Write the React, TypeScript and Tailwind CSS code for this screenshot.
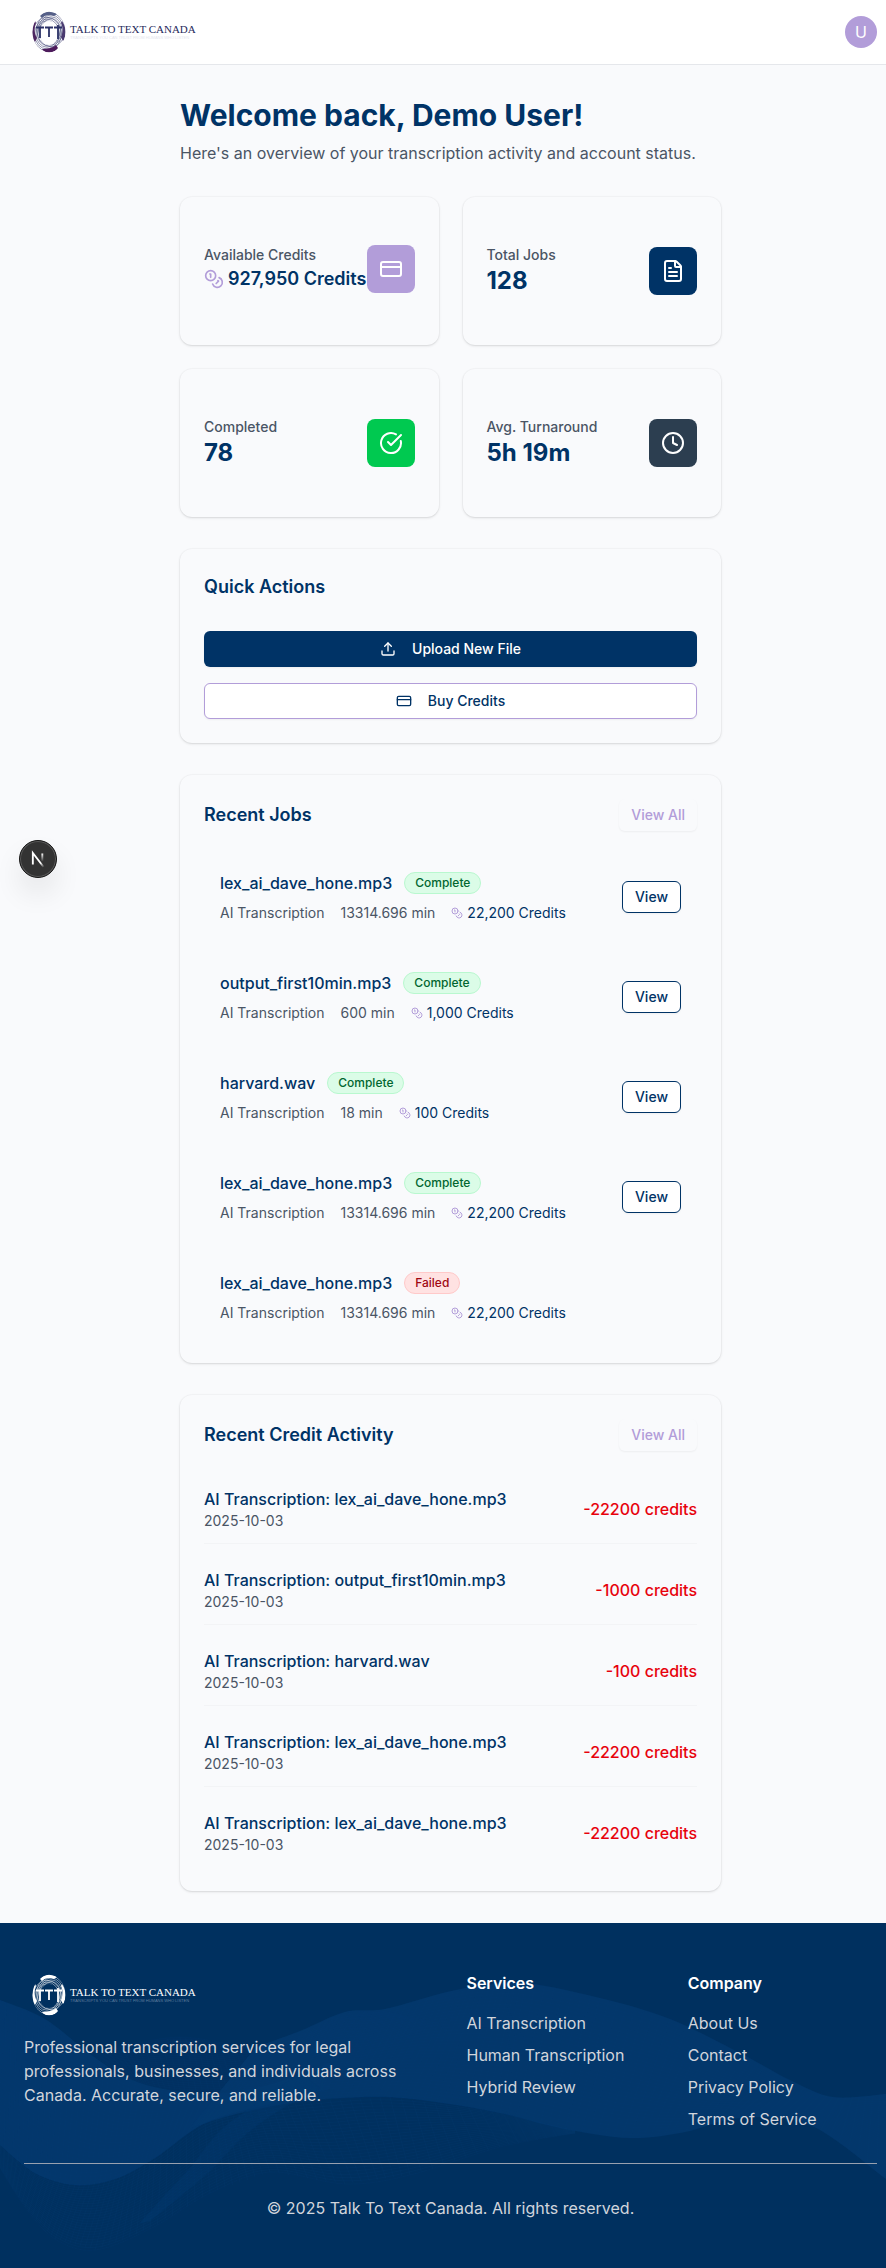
import React from "react";
import { CircleCheckBig, Clock, Coins, CreditCard, FileText, Upload } from "lucide-react";

type Point = [number, number];

const RINGS = [9.5, 11, 12.5, 14];

function LogoMark({ light }: { light: boolean }) {
  const id = light ? "mark-light" : "mark-dark";
  const ink = light ? "#ffffff" : "#2b3166";
  const paper = light ? "#00305f" : "#ffffff";
  return (
    <svg width="34" height="42" viewBox="0 0 34 42" fill="none" className="shrink-0" aria-hidden="true">
      <defs>
        <clipPath id={id}>
          <ellipse cx="17" cy="21" rx="16.5" ry="20.3" />
        </clipPath>
      </defs>
      <g clipPath={`url(#${id})`}>
        <ellipse cx="17" cy="21" rx="16" ry="20" fill={paper} />
        {RINGS.map((r) => (
          <g key={r} stroke={ink} strokeWidth="0.7" opacity="0.7">
            <ellipse cx="19" cy="19" rx={r} ry={r * 1.2} />
            <ellipse cx="15" cy="23" rx={r} ry={r * 1.2} />
          </g>
        ))}
        <ellipse cx="17" cy="22" rx="9.5" ry="12" fill={paper} />
        <path d="M8 5C13-1 22-1 25 3L22 5C18 3 13 4 10 7Z" fill={light ? "#fff" : "#566088"} />
        <path d="M10 38C14 38 21 37 24 34L26 37C22 43 13 43 10 38Z" fill={light ? "#fff" : "#4d1b5c"} />
        <path d="M3 10C-1 17-1 26 3 31L5 27C2 22 2 17 4 12Z" fill={light ? "#fff" : "#4d2560"} />
        <path d="M30 10C35 17 34 26 31 30L29 26C31 21 31 16 29 12Z" fill={light ? "#fff" : "#4a3a70"} />
      </g>
      <path
        d="M4 16.5H12M13 16.5H21M22 16.5H30M8 16.5V27M17 16.5V26M26 14V28"
        stroke={ink}
        strokeWidth="1.8"
      />
    </svg>
  );
}

function Logo({ light = false }: { light?: boolean }) {
  return (
    <a href="#" className="flex h-12 w-fit items-center gap-1 pl-2">
      <LogoMark light={light} />
      <span className="flex flex-col whitespace-nowrap">
        <span
          className={`font-['Liberation_Serif',serif] text-[11px] leading-3 ${light ? "text-white" : "text-[#1f2a5c]"}`}
        >
          TALK TO TEXT CANADA
        </span>
        <span
          className={`font-['Liberation_Sans',sans-serif] text-[4px] leading-[6px] ${light ? "text-[#5f7d9d]" : "text-[#e6e6ee]"}`}
        >
          TRANSCRIPTS YOU CAN TRUST FROM HUMANS WHO LISTEN
        </span>
      </span>
    </a>
  );
}

function Header() {
  return (
    <header className="border-b border-gray-200 bg-white">
      <div className="flex h-16 items-center justify-between pr-[9px] pl-6">
        <Logo />
        <button
          type="button"
          aria-label="Account menu"
          className="flex size-8 items-center justify-center rounded-full bg-[#b29dd9] text-base text-white"
        >
          U
        </button>
      </div>
    </header>
  );
}

function Card({ children, className = "" }: { children: React.ReactNode; className?: string }) {
  return (
    <section className={`rounded-xl bg-[#f9fafc] shadow-sm ring-1 ring-black/2 ${className}`}>{children}</section>
  );
}

type StatProps = { label: string; tone: string; icon: React.ReactNode; children: React.ReactNode };

function Stat({ label, tone, icon, children }: StatProps) {
  return (
    <Card className="min-h-[148px] px-6 py-12">
      <div className="flex items-center justify-between">
        <div>
          <p className="text-sm font-medium text-gray-600">{label}</p>
          {children}
        </div>
        <div className={`flex size-12 shrink-0 items-center justify-center rounded-lg text-white ${tone}`}>{icon}</div>
      </div>
    </Card>
  );
}

function StatValue({ children }: { children: React.ReactNode }) {
  return <p className="text-2xl font-bold text-[#003366]">{children}</p>;
}

function Stats() {
  return (
    <div className="mb-8 grid grid-cols-2 gap-6">
      <Stat label="Available Credits" tone="bg-[#b29dd9]" icon={<CreditCard className="size-6" />}>
        <p className="flex items-center gap-1 text-lg font-semibold whitespace-nowrap text-[#003366]">
          <Coins className="size-5 shrink-0 text-[#b29dd9]" />
          927,950 Credits
        </p>
      </Stat>
      <Stat label="Total Jobs" tone="bg-[#003366]" icon={<FileText className="size-6" />}>
        <StatValue>128</StatValue>
      </Stat>
      <Stat label="Completed" tone="bg-[#00c950]" icon={<CircleCheckBig className="size-6" />}>
        <StatValue>78</StatValue>
      </Stat>
      <Stat label="Avg. Turnaround" tone="bg-[#2c3e50]" icon={<Clock className="size-6" />}>
        <StatValue>5h 19m</StatValue>
      </Stat>
    </div>
  );
}

function QuickActions() {
  return (
    <Card className="mb-8 p-6">
      <h2 className="mb-[30px] text-lg font-semibold text-[#003366]">Quick Actions</h2>
      <div className="flex flex-col gap-4">
        <button
          type="button"
          className="flex h-9 items-center justify-center gap-4 rounded-md bg-[#003366] text-sm font-medium text-white shadow-xs"
        >
          <Upload className="size-4" />
          Upload New File
        </button>
        <button
          type="button"
          className="flex h-9 items-center justify-center gap-4 rounded-md border border-[#b29dd9] bg-white text-sm font-medium text-[#003366] shadow-xs"
        >
          <CreditCard className="size-4" />
          Buy Credits
        </button>
      </div>
    </Card>
  );
}

function ListHeader({ title }: { title: string }) {
  return (
    <div className="mb-6 flex items-center justify-between">
      <h2 className="text-lg font-semibold text-[#003366]">{title}</h2>
      <a
        href="#"
        className="flex h-8 items-center rounded-md bg-[#f9fafc] px-3 text-sm font-medium text-[#b29dd9] shadow-xs"
      >
        View All
      </a>
    </div>
  );
}

type Job = { name: string; minutes: string; credits: string; failed?: boolean };

const jobs: Job[] = [
  { name: "lex_ai_dave_hone.mp3", minutes: "13314.696", credits: "22,200" },
  { name: "output_first10min.mp3", minutes: "600", credits: "1,000" },
  { name: "harvard.wav", minutes: "18", credits: "100" },
  { name: "lex_ai_dave_hone.mp3", minutes: "13314.696", credits: "22,200" },
  { name: "lex_ai_dave_hone.mp3", minutes: "13314.696", credits: "22,200", failed: true },
];

function JobRow({ job }: { job: Job }) {
  return (
    <li className="flex items-center justify-between p-4">
      <div>
        <div className="mb-2 flex items-center gap-3">
          <h3 className="font-medium text-[#003366]">{job.name}</h3>
          <span
            className={`rounded-full border px-2.5 py-0.5 text-xs font-medium ${
              job.failed ? "border-red-200 bg-red-100 text-red-800" : "border-green-200 bg-green-100 text-green-800"
            }`}
          >
            {job.failed ? "Failed" : "Complete"}
          </span>
        </div>
        <div className="flex items-center gap-4 text-sm text-gray-600">
          <span>AI Transcription</span>
          <span>{job.minutes} min</span>
          <span className="flex items-center gap-1 text-[#003366]">
            <Coins className="size-3 text-[#b29dd9]" />
            {job.credits} Credits
          </span>
        </div>
      </div>
      {!job.failed && (
        <button
          type="button"
          className="h-8 rounded-md border border-[#003366] bg-white px-3 text-sm font-medium text-[#003366] shadow-xs"
        >
          View
        </button>
      )}
    </li>
  );
}

const activity = [
  { file: "lex_ai_dave_hone.mp3", amount: 22200 },
  { file: "output_first10min.mp3", amount: 1000 },
  { file: "harvard.wav", amount: 100 },
  { file: "lex_ai_dave_hone.mp3", amount: 22200 },
  { file: "lex_ai_dave_hone.mp3", amount: 22200 },
];

function smooth(points: Point[]) {
  let d = `M${points[0][0]} ${points[0][1]}`;
  for (let i = 0; i < points.length - 1; i++) {
    const a = points[Math.max(i - 1, 0)];
    const b = points[i];
    const c = points[i + 1];
    const e = points[Math.min(i + 2, points.length - 1)];
    d += `C${b[0] + (c[0] - a[0]) / 6} ${b[1] + (c[1] - a[1]) / 6} ${c[0] - (e[0] - b[0]) / 6} ${c[1] - (e[1] - b[1]) / 6} ${c[0]} ${c[1]}`;
  }
  return d;
}

function mix(p: Point, q: Point, t: number): Point {
  return [p[0] + (q[0] - p[0]) * t, p[1] + (q[1] - p[1]) * t];
}

type RibbonProps = { top: Point[]; bottom: Point[]; lines: number; fill: number; mesh: number };

function Ribbon({ top, bottom, lines, fill, mesh }: RibbonProps) {
  const closed = `${smooth(top)}L${smooth([...bottom].reverse()).slice(1)}Z`;
  const strands = Array.from({ length: lines + 1 }, (_, k) => smooth(top.map((p, i) => mix(p, bottom[i], k / lines))));
  const rungs: string[] = [];
  for (let i = 0; i < top.length - 1; i++) {
    for (let s = 0; s < 8; s++) {
      const a = mix(top[i], top[i + 1], s / 8);
      const b = mix(bottom[i], bottom[i + 1], s / 8);
      rungs.push(`M${a[0]} ${a[1]}L${b[0]} ${b[1]}`);
    }
  }
  return (
    <g>
      {fill > 0 && <path d={closed} fill="#04396f" opacity={fill} />}
      <g stroke="#0a447f" strokeWidth="0.5" opacity={mesh}>
        <path d={strands.join("")} />
        <path d={rungs.join("")} />
      </g>
    </g>
  );
}

function Waves() {
  return (
    <svg
      className="absolute inset-0 size-full"
      viewBox="0 0 886 345"
      preserveAspectRatio="none"
      fill="none"
      aria-hidden="true"
    >
      <Ribbon
        lines={24}
        fill={0.15}
        mesh={0.2}
        top={[[90, 131], [130, 121], [180, 114], [225, 120], [260, 124], [310, 108], [345, 92], [385, 88]]}
        bottom={[[130, 156], [150, 163], [190, 169], [240, 169], [280, 164], [330, 150], [380, 130], [440, 100]]}
      />
      <Ribbon
        lines={30}
        fill={0.8}
        mesh={0.15}
        top={[[0, 77], [45, 96], [90, 131], [130, 156], [175, 168], [225, 170], [275, 160], [330, 140]]}
        bottom={[[0, 222], [35, 250], [75, 262], [115, 256], [155, 235], [205, 200], [265, 182], [330, 166]]}
      />
      <Ribbon
        lines={34}
        fill={0.75}
        mesh={0.15}
        top={[[256, 124], [300, 108], [345, 89], [385, 86], [443, 70], [485, 62], [526, 60], [600, 75], [670, 96], [740, 130], [790, 157], [833, 174], [886, 171]]}
        bottom={[[190, 205], [240, 190], [290, 180], [340, 175], [390, 174], [443, 180], [500, 190], [565, 206], [630, 215], [685, 209], [740, 195], [810, 202], [886, 256]]}
      />
      <Ribbon
        lines={26}
        fill={0.04}
        mesh={0.28}
        top={[[0, 222], [35, 250], [75, 262], [115, 256], [155, 235], [205, 200], [250, 188], [310, 178], [390, 174], [480, 186], [575, 208]]}
        bottom={[[0, 245], [25, 284], [55, 316], [95, 327], [150, 306], [210, 270], [270, 249], [345, 261], [410, 252], [500, 224], [575, 210]]}
      />
      <Ribbon
        lines={10}
        fill={0.35}
        mesh={0.15}
        top={[[140, 300], [165, 272], [190, 245], [218, 210], [250, 185], [300, 150]]}
        bottom={[[150, 298], [182, 272], [210, 248], [242, 215], [275, 190], [320, 165]]}
      />
    </svg>
  );
}

function FooterLinks({ title, links }: { title: string; links: string[] }) {
  return (
    <nav aria-label={title}>
      <h3 className="mb-4 font-semibold text-white">{title}</h3>
      <ul className="flex flex-col gap-2">
        {links.map((link) => (
          <li key={link}>
            <a href="#">{link}</a>
          </li>
        ))}
      </ul>
    </nav>
  );
}

function Footer() {
  return (
    <footer className="relative overflow-hidden bg-[#00305f] text-gray-300">
      <Waves />
      <div className="relative py-12 pr-[9px] pl-6">
        <div className="grid grid-cols-4 gap-8">
          <div className="col-span-2">
            <Logo light />
            <p className="mt-4 max-w-md">
              Professional transcription services for legal professionals, businesses, and individuals across Canada.
              Accurate, secure, and reliable.
            </p>
          </div>
          <FooterLinks title="Services" links={["AI Transcription", "Human Transcription", "Hybrid Review"]} />
          <FooterLinks title="Company" links={["About Us", "Contact", "Privacy Policy", "Terms of Service"]} />
        </div>
        <p className="mt-8 border-t border-[#99a1af] pt-8 text-center">
          © 2025 Talk To Text Canada. All rights reserved.
        </p>
      </div>
    </footer>
  );
}

function DevBadge() {
  return (
    <button
      type="button"
      aria-label="Open developer tools"
      className="absolute top-[840px] left-[19px] flex size-[38px] items-center justify-center rounded-full border border-[#171717] bg-[#333333] shadow-[inset_0_0_0_1px_#5a5a5a,0_16px_32px_-8px_rgba(0,0,0,0.24)]"
    >
      <svg width="36" height="36" viewBox="0 0 36 36" fill="none" className="shrink-0" aria-hidden="true">
        <defs>
          <linearGradient id="n-diagonal" x1="9.96" y1="11.12" x2="15.48" y2="17.97" gradientUnits="userSpaceOnUse">
            <stop stopColor="white" />
            <stop offset="0.6" stopColor="white" stopOpacity="0" />
          </linearGradient>
          <linearGradient id="n-stem" x1="11.82" y1="1.4" x2="11.79" y2="9.63" gradientUnits="userSpaceOnUse">
            <stop stopColor="white" />
            <stop offset="1" stopColor="white" stopOpacity="0" />
          </linearGradient>
        </defs>
        <g transform="translate(10.5 11)" strokeWidth="1.86">
          <path d="M13.3 15.2L2.34 1V12.6" stroke="url(#n-diagonal)" />
          <path d="M11.8 1.5L11.82 13.1" stroke="url(#n-stem)" />
        </g>
      </svg>
    </button>
  );
}

export default function App() {
  return (
    <div className="relative min-h-screen bg-[#f9fafc] font-['Inter',sans-serif] text-base">
      <Header />
      <main className="py-8 pr-[9px] pl-6">
        <div className="mx-auto max-w-[541px]">
          <h1 className="mb-2 text-3xl font-bold text-[#003366]">Welcome back, Demo User!</h1>
          <p className="mb-8 text-gray-600">Here's an overview of your transcription activity and account status.</p>
          <Stats />
          <QuickActions />
          <Card className="mb-8 p-6">
            <ListHeader title="Recent Jobs" />
            <ul className="flex flex-col gap-4">
              {jobs.map((job, i) => (
                <JobRow key={i} job={job} />
              ))}
            </ul>
          </Card>
          <Card className="p-6">
            <ListHeader title="Recent Credit Activity" />
            <ul className="flex flex-col gap-3">
              {activity.map((entry, i) => (
                <li
                  key={i}
                  className="flex items-center justify-between border-b border-gray-100 py-3 last:border-b-0"
                >
                  <div>
                    <p className="font-medium text-[#003366]">AI Transcription: {entry.file}</p>
                    <p className="text-sm text-gray-600">2025-10-03</p>
                  </div>
                  <p className="font-medium text-red-600">-{entry.amount} credits</p>
                </li>
              ))}
            </ul>
          </Card>
        </div>
      </main>
      <Footer />
      <DevBadge />
    </div>
  );
}
